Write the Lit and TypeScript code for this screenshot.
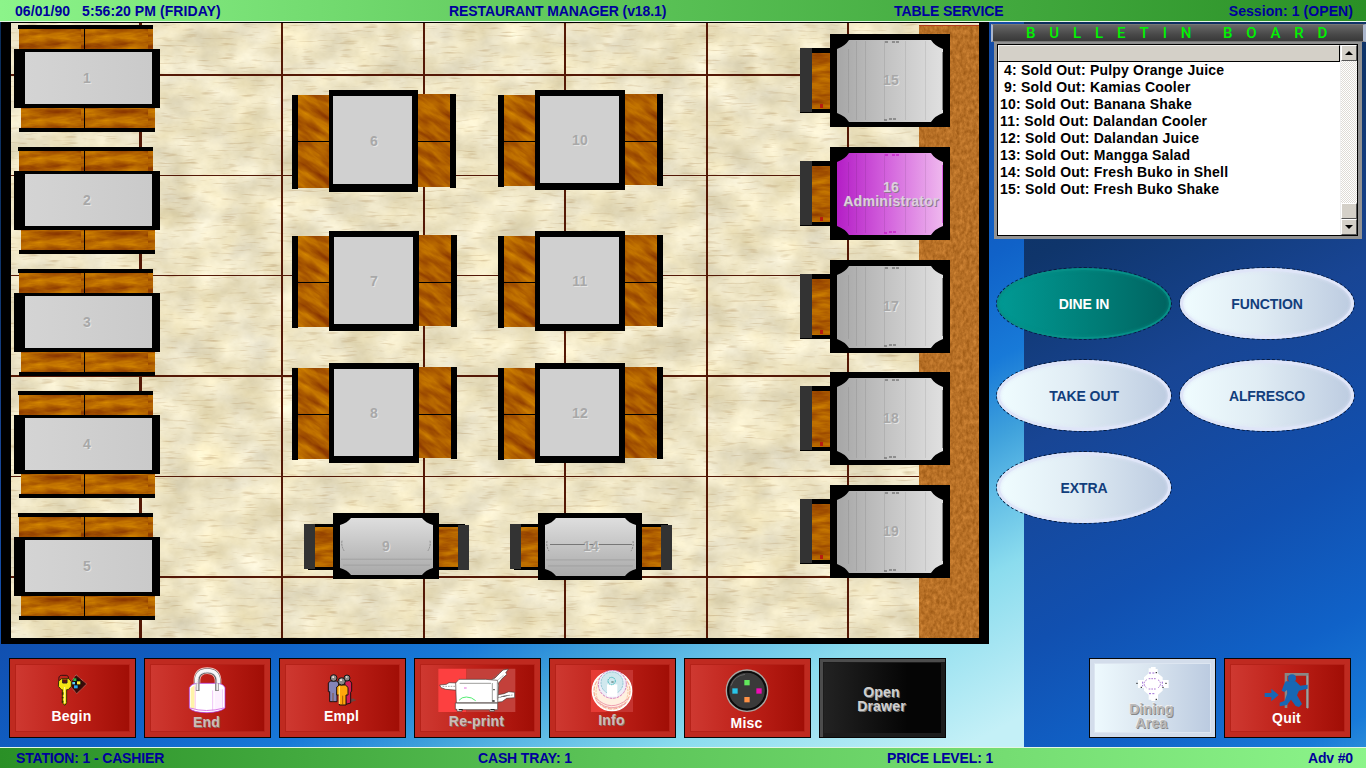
import { LitElement, html, svg, css, nothing } from "lit";
import { customElement } from "lit/decorators.js";
import { classMap } from "lit/directives/class-map.js";
import { styleMap } from "lit/directives/style-map.js";

type Kind = "booth" | "square" | "lounge" | "window";
interface Table { n: string; kind: Kind; x: number; y: number; w: number; h: number; lx: number; ly: number; owner?: string; }

// Positions are relative to the floor canvas, whose origin is at (0, 22).
const TABLES: Table[] = [
  ...[0, 1, 2, 3, 4].map((i): Table => ({ n: String(i + 1), kind: "booth", x: 14, y: 3 + i * 122, w: 146, h: 107, lx: 73, ly: 53 })),
  { n: "6", kind: "square", x: 292, y: 68, w: 164, h: 102, lx: 82, ly: 51 },
  { n: "7", kind: "square", x: 292, y: 209, w: 165, h: 100, lx: 82, ly: 50 },
  { n: "8", kind: "square", x: 292, y: 341, w: 165, h: 100, lx: 82, ly: 50 },
  { n: "10", kind: "square", x: 498, y: 68, w: 165, h: 100, lx: 82, ly: 50 },
  { n: "11", kind: "square", x: 498, y: 209, w: 165, h: 100, lx: 82, ly: 50 },
  { n: "12", kind: "square", x: 498, y: 341, w: 165, h: 100, lx: 82, ly: 50 },
  { n: "9", kind: "lounge", x: 304, y: 491, w: 165, h: 66, lx: 82, ly: 33 },
  { n: "14", kind: "lounge", x: 510, y: 491, w: 162, h: 67, lx: 81, ly: 33 },
  ...[12, 125, 238, 350, 463].map((y, i): Table => ({
    n: String(i + 15), kind: "window", x: 800, y, w: 150, h: 93, lx: 91, ly: 46,
    owner: i === 1 ? "Administrator" : undefined,
  })),
];

const BULLETINS = [
  " 4: Sold Out: Pulpy Orange Juice", " 9: Sold Out: Kamias Cooler", "10: Sold Out: Banana Shake",
  "11: Sold Out: Dalandan Cooler", "12: Sold Out: Dalandan Juice", "13: Sold Out: Mangga Salad",
  "14: Sold Out: Fresh Buko in Shell", "15: Sold Out: Fresh Buko Shake",
];

const MODES = ["DINE IN", "FUNCTION", "TAKE OUT", "ALFRESCO", "EXTRA"];

// A plate with gently concave corners, a wide and b tall.
const plate = (x: number, y: number, w: number, h: number, a: number, b: number) => {
  const r = x + w, d = y + h, p = a * 0.68, q = b * 0.68;
  return `M${x + a} ${y}H${r - a}Q${r - p} ${y + q} ${r} ${y + b}V${d - b}Q${r - p} ${d - q} ${r - a} ${d}H${x + a}Q${x + p} ${d - q} ${x} ${d - b}V${y + b}Q${x + p} ${y + q} ${x + a} ${y}Z`;
};

function tableArt(t: Table) {
  const { w, h } = t;
  if (t.kind === "booth") return svg`
    <rect x="5" y="4" width="134" height="21" fill="url(#wood)"/><rect x="4" y="0" width="135" height="4"/>
    <rect x="7" y="83" width="134" height="21" fill="url(#wood)"/><rect x="5" y="103" width="136" height="4"/>
    <rect x="70" y="3" width="1" height="100"/>
    <rect y="24" width="146" height="59"/><rect x="11" y="27" width="127" height="52" fill="url(#flat)"/>`;
  if (t.kind === "square") {
    const tw = w - 75, r = 37 + tw, six = h === 102 ? 1 : 0;
    return svg`
    <rect x="6" y="5" width="31" height="${h - 9}" fill="url(#wood2)"/><rect x="0" y="5" width="6" height="${h - 8}"/>
    <rect x="${r}" y="4" width="32" height="${h - 9}" fill="url(#wood2)"/><rect x="${r + 32}" y="4" width="6" height="${h - 8}"/>
    <rect x="6" y="51" width="${w - 12}" height="1"/>
    <rect x="37" width="${tw}" height="${h}"/>
    <rect x="${42 - six}" y="6" width="79" height="${h - 13 - six}" fill="#d0d0d0"/>`;
  }
  if (t.kind === "lounge") {
    const l = t.n === "9" ? 29 : 28, tw = t.n === "9" ? 106 : 104, e = l + tw;
    return svg`
    <rect x="4" y="11" width="${w - 8}" height="46"/>
    <rect x="0" y="11" width="11" height="45" fill="#333"/><rect x="${w - 11}" y="12" width="11" height="45" fill="#333"/>
    <rect x="11" y="14" width="${l - 11}" height="40" fill="url(#wood3)"/>
    <rect x="${e}" y="14" width="19" height="40" fill="url(#wood3)"/>
    <rect x="${l}" width="${tw}" height="${h}"/>
    <path d="${plate(l + 7, 5, tw - 13, h - 9, 11, 7)}" fill="url(#down)"/>
    <path d="M${l + 8} ${h * .7}H${e - 7}M${l + 10} ${h * .79}H${e - 9}" stroke="#999" stroke-width=".7"/>
    <path d="M${l + 9} ${h * .42}q-1 5 2 10M${e - 9} ${h * .42}q1 5-2 10" fill="none" stroke="#888" stroke-dasharray="2 1"/>
    ${t.n === "14" ? svg`<path d="M${l + 12} 31.5H${e - 10}" stroke="#777"/>` : nothing}`;
  }
  return svg`
    <rect y="14" width="31" height="65"/><rect y="14" width="12" height="64" fill="#333"/>
    <rect x="12" y="19" width="18" height="56" fill="url(#wood3)"/><rect x="20" y="70" width="3" height="4" fill="#b81c10"/>
    <rect x="30" width="120" height="93"/>
    <path d="${plate(37, 6, 106, 82, 12, 9)}" fill="url(#${t.owner ? "busy" : "side"})"/>
    <path d="M48.500 15V79M56.500 7V86M65.500 7V86M84.500 7V86M105.500 7V86M125.500 7V86" stroke="#000" stroke-opacity=".08"/>
    <path d="M85 8h4m3 0h8M84 86h3m2-1h8" stroke="${t.owner ? "#c000c0" : "#555"}" stroke-dasharray="3 1"/>
    <path d="M142.500 18V76" stroke="${t.owner ? "#e060e8" : "#888"}"/>`;
}

const ICONS: Record<string, unknown> = {
  key: svg`<svg viewBox="170 100 96 102" width="32" height="34">
    <path d="M230 105l32 28-30 29-22-27z" fill="#3a0a08" stroke="#eaa89a" stroke-width="2" stroke-dasharray="3 2"/>
    <path d="M220 130l12-16 16 14-12 20z" fill="#111"/><path d="M222 116h9v8h-9z" fill="#28b840"/><path d="M233 125h10v9h-10z" fill="#ffef30"/><path d="M224 137h11v9h-11z" fill="#28a8f0"/><path d="M219 127h8v7h-8z" fill="#58d0ff"/>
    <path d="M179 124q-3-17 8-17h14q9 0 6 19" fill="none" stroke="#311" stroke-width="3"/>
    <path d="M178 124l9-7h22l7 9v14l-9 10h-5v39l-5 8-8-7v-40h-3l-9-10z" fill="#f4e414" stroke="#3b3000" stroke-width="3"/>
    <path d="M190 119v11h13v-11" fill="#681008" stroke="#222" stroke-width="3"/><path d="M196 142v48" stroke="#fffba0" stroke-width="3"/><path d="M190 158v7m0 7v4m0 7v6" stroke="#332c00" stroke-width="5"/></svg>`,
  lock: svg`<svg viewBox="563 80 114 141" width="38" height="47">
    <path d="M590 150v-32q2-27 31-27t32 27v32" fill="none" stroke="#f3c3bd" stroke-width="20"/>
    <path d="M590 150v-32q2-27 31-27t32 27v32" fill="none" stroke="#555" stroke-width="15"/>
    <path d="M589 150v-32q2-27 32-27t33 27v32" fill="none" stroke="#f8f8f8" stroke-width="11"/>
    <path d="M593 150v-30q3-24 28-24t28 24v30" fill="none" stroke="#aab" stroke-width="2" stroke-dasharray="4 2"/>
    <path d="M567 142q6-12 22-13h60q20 1 25 13v61q-15 13-54 14-42 0-53-14z" fill="#fff" stroke="#b030e8" stroke-width="2"/>
    <path d="M571 143l12-8v73l-12-6z" fill="#fff4a8"/><path d="M585 139v67" stroke="#ffd6ee" stroke-width="4"/><path d="M637 150v61m29-64v57" stroke="#e7a4f2" stroke-width="2"/><path d="M643 146h19v63h-19z" fill="#fdf0ff"/><path d="M569 203q48 15 102 0" fill="none" stroke="#d87be7" stroke-width="3"/><path d="M592 129v23m58-23v23" stroke="#777" stroke-width="11"/><path d="M591 129v21m60-21v21" stroke="#eee" stroke-width="6"/></svg>`,
  people: svg`<svg viewBox="984 100 90 102" width="30" height="34">
    <path d="M1034 196l38-14-10-6-25 10z" fill="#6d4440"/>
    <g stroke="#1d1010" stroke-width="3"><path d="M1037 128l6-5h10l5 7v24l-3 4v32l-14 4z" fill="#d51d55"/><path d="M988 130l6-6h19l6 6v26h-5v30h-22v-30h-4z" fill="#8484b8"/>
    <path d="M1013 142l8-6h18l8 7v23h-6v30h-20v-30h-8z" fill="#ffa60b"/></g>
    <path d="M1021 140v53" stroke="#ffe070" stroke-width="4"/><path d="M1031 168v27m-29-35v26" stroke="#7a3900" stroke-width="2"/>
    <g fill="#8d8787" stroke="#161616" stroke-width="3"><circle cx="1044" cy="115" r="9"/><circle cx="1004" cy="115" r="10"/><circle cx="1028" cy="125" r="11"/></g>
    <path d="M1000 110h5v5h-5zM1041 110h4v4h-4zM1023 119h6v5h-6z" fill="#f0e8e0"/></svg>`,
  printer: svg`<svg viewBox="86 85 234 135" width="78" height="45">
    <path d="M87 87h84v130H87z" fill="#fd4040"/><path d="M171 87h147v130H171z" fill="#c3403a"/>
    <g fill="#fff" stroke="#4a3733" stroke-width="2"><path d="M145 130l-26-1-8 5-20 2 4 8 14 5 36 3zM243 122l14-7 14-14 10-10 16-3-8 12 4 4-14 12-14 18zM262 166l22-4 14-6 18 2v16l-24 2-14 10-18 2z"/><path d="M139 130l10-11h80l35 3 4 14-3 54H141z"/><path d="M138 190h127v20h-10v5h-14v-5h-83v5h-15v-6h-5z"/></g>
    <path d="M151 131h94m-103 59h123m-16-60v56m15-58v52" stroke="#70706c" stroke-width="2"/><path d="M149 182q8-10 22-10 16 0 28 11" fill="none" stroke="#52ed72" stroke-width="3"/><path d="M250 116l24-18m-10 24l20-16M266 174l20-6 24-2M100 140h40" stroke="#777" stroke-width="2" stroke-dasharray="5 3"/><path d="M164 145h8" stroke="#e76ddd" stroke-width="3"/><path d="M249 184h7m-4-34h4M148 210h12m83 0h13" stroke="#222" stroke-width="4"/></svg>`,
  info: svg`<svg viewBox="543 90 126 126" width="42" height="42">
    <path d="M543 90h126v126H543z" fill="#e63b35"/><path d="M589 90h80v126h-80z" fill="#c53430"/>
    <circle cx="606" cy="153" r="59" fill="#fff0e0" stroke="#fff" stroke-width="4"/><circle cx="606" cy="153" r="54" fill="none" stroke="#f2a48b" stroke-width="3" stroke-dasharray="12 5"/><circle cx="606" cy="156" r="48" fill="none" stroke="#f6c79b" stroke-width="3" stroke-dasharray="7 3"/><path d="M556 172q46 48 98 4M560 184q42 36 88 6" fill="none" stroke="#efa0b0" stroke-width="3"/><circle cx="607" cy="133" r="42" fill="#eeeef8" stroke="#d77fbb" stroke-width="3" stroke-dasharray="8 3"/><circle cx="606" cy="129" r="33" fill="#d0e8ee" stroke="#73b5c6" stroke-width="2" stroke-dasharray="7 2"/><path d="M591 133h31v37h-31z" fill="#fff"/><circle cx="605" cy="123" r="11" fill="none" stroke="#40b8bc" stroke-width="3" stroke-dasharray="5 2"/><path d="M604 126h7" stroke="#39605b" stroke-width="3"/></svg>`,
  misc: svg`<svg viewBox="136 83 132 138" width="44" height="46">
    <circle cx="202" cy="151" r="62" fill="#202020" stroke="#aaa6a2" stroke-width="4"/><circle cx="202" cy="151" r="56" fill="#3a3a3a" stroke="#0a0a0a" stroke-width="5"/><path d="M154 136q10-30 42-34" fill="none" stroke="#777" stroke-width="2"/><path d="M194 119h16v16h-16z" fill="#61e85c"/><path d="M158 144h16v16h-16z" fill="#29c4e7"/><path d="M230 144h16v16h-16z" fill="#ee0cb4"/><path d="M194 170h16v16h-16z" fill="#ff9145"/></svg>`,
  seats: svg`<svg viewBox="166 80 102 102" width="34" height="34">
    <path d="M207 84h7v-4h14v6h6v13l15 12v8h18v24h-18v8l-14 12v15h-8v4h-12v-4h-8v-15l-14-12v-8h-18v-24h18v-8l14-12z" fill="#fff"/>
    <path d="M201 118q-15 12 0 25m34-25q15 12 0 25M207 115h23m-23 31h23" fill="none" stroke="#8536be" stroke-width="2" stroke-dasharray="5 3"/><path d="M189 124v14m59-14v14m-40-40h20m-20 62h20" stroke="#6b23c0" stroke-width="2" stroke-dasharray="6 4"/><path d="M170 129h4m9 12h4m70-12h4m-13 12h4m-24-44h4m-4 80h4" stroke="#111" stroke-width="3"/></svg>`,
  exit: svg`<svg viewBox="553 94 138 114" width="46" height="38">
    <path d="M619 202V101h64v101" fill="none" stroke="#8a8784" stroke-width="8"/><path d="M684 105v99" stroke="#b9b2ad" stroke-width="2"/>
    <path d="M555 157h20v-13l22 19-22 19v-13h-20z" fill="#1767b4"/><circle cx="637" cy="113" r="12" fill="#1767b4"/>
    <path d="M618 122h30l14 13 22-3v12l-26 6-6 14 15 26-9 9-10-3-14-19-12 16-22 4v-11l15-6 8-22-1-10-8 6-8-4 6-16z" fill="#1767b4"/></svg>`,
};

interface Action { label: string[]; icon?: string; top: number; gap: number; tone?: string; off?: boolean; }
const ACTIONS: Action[] = [
  { label: ["Begin"], icon: "key", top: 14, gap: 2 },
  { label: ["End"], icon: "lock", top: 8, gap: 1, off: true },
  { label: ["Empl"], icon: "people", top: 14, gap: 2 },
  { label: ["Re-print"], icon: "printer", top: 9, gap: 1, off: true },
  { label: ["Info"], icon: "info", top: 11, gap: 1, off: true },
  { label: ["Misc"], icon: "misc", top: 9, gap: 2 },
  { label: ["Open", "Drawer"], top: 26, gap: 0, tone: "black", off: true },
];
const RIGHT: Action[] = [
  { label: ["Dining", "Area"], icon: "seats", top: 8, gap: 1, tone: "pale", off: true },
  { label: ["Quit"], icon: "exit", top: 13, gap: 1 },
];

@customElement("app-root")
export class AppRoot extends LitElement {
  static styles = css`
    :host { display: flex; flex-direction: column; width: 1366px; height: 768px; overflow: hidden; position: relative;
      font: bold 14px/14px "Liberation Sans", Arial, sans-serif; letter-spacing: -.1px;
      background: linear-gradient(151.6deg, #0a2c58 0%, #0f356b 20%, #184594 34%, #1150b0 49%, #1062c8 60%, #187ad8 68%, #40a2dc 74%, #58b6e4 77%, #8bdcee 84%, #c4f0f7 96%) 0 0 / 1024px 768px repeat-x; }
    * { box-sizing: border-box; }
    .bar { display: grid; height: 22px; flex: none; color: #00009c; white-space: pre; padding: 4px 13px 0 15px;
      background: linear-gradient(90deg, #8cf48a, #5cc458 45%, #2a9026); border-bottom: 1px solid #e4f6e4;
      grid-template-columns: 434px 445px 1fr auto; }
    .bar.foot { height: 21px; border-bottom: 0; border-top: 1px solid #e4f6e4; grid-template-columns: 462px 409px 1fr auto; padding-left: 16px; padding-top: 3px;
      background: linear-gradient(90deg, #2a9026, #5cc458 45%, #8cf48a); }
    .bar span:first-child, .bar span:last-child { letter-spacing: .08px; }
    .bar.foot span { letter-spacing: -.15px; }
    .main { display: grid; grid-template-columns: 989px 1fr; height: 622px; flex: none; }
    .floor { position: relative; height: 622px; }
    .ground { display: block; }
    .table { position: absolute; }
    .table svg { display: block; overflow: visible; }
    .tag { position: absolute; transform: translate(-50%, -50%); text-align: center; color: #a8a8a8; text-shadow: 1px 1px 0 #e4e4e4; letter-spacing: .3px; white-space: nowrap; }
    .tag.on { color: #dccfdf; text-shadow: 1px 1px 0 #8e7890; }
    .side { display: flex; flex-direction: column; }
    .title { display: flex; align-items: center; height: 18px; margin: 2px 0 0 2px; padding-left: 33px; border: 1px solid #777; border-left: 2px solid #aab6cc; border-right: 3px solid #aab6cc;
      background: linear-gradient(#686868, #484848 60%, #383838); color: #00f400; font: 500 15px/16px Roboto, sans-serif; letter-spacing: 13.9px; white-space: pre; overflow: hidden; }
    .board { display: grid; grid-template-columns: 1fr 17px; height: 197px; margin: 0 4px 0 5px; border: 3px solid #929292; border-top-width: 2px; border-right-width: 4px; background: #000; padding: 1px; }
    .list { background: #fff; }
    .head { height: 17px; background: #d4d0c8; border: 1px solid #f4f2ee; border-right: 1px solid #000; border-bottom: 1px solid #000; }
    .line { height: 17px; line-height: 17px; padding-left: 2px; color: #000; white-space: pre; letter-spacing: .2px; }
    .scroll { display: flex; flex-direction: column; background: repeating-conic-gradient(#fff 0 25%, #dedbd5 0 50%) 0 0 / 2px 2px; border-left: 1px solid #eee; }
    .knob { display: flex; align-items: center; justify-content: center; height: 16px; background: #d4d0c8; border: 1px solid; border-color: #fff #555 #555 #fff; }
    .knob.thumb { margin-top: auto; }
    .modes { display: grid; grid-template-columns: 176px 176px; grid-auto-rows: 73px; gap: 19px 7px; margin: 28px 0 0 7px; }
    .mode { display: flex; align-items: center; justify-content: center; border-radius: 50%; border: 1px dashed #081c40; color: #123e7c;
      background: linear-gradient(90deg, #f0fdff, #e0ecf4 45%, #bccbe0) padding-box; box-shadow: inset 0 0 0 3px #dfe5f8, inset 0 0 3px 4px #dfe5f890; }
    .mode.sel { color: #fff; background: linear-gradient(90deg, #019a94, #007b75 60%, #006360) padding-box; box-shadow: inset 0 0 0 2px #078f87, inset 0 0 3px 3px #078f8770; }
    .actions { display: flex; gap: 8px; height: 103px; flex: none; padding: 14px 15px 0 9px; }
    .push { display: flex; flex-direction: column; align-items: center; width: 127px; height: 80px; padding-right: 1px; border: 1px solid #060606; color: #fff; letter-spacing: .2px;
      background: linear-gradient(90deg, #d03b33, #bd2018 50%, #9e0c04); box-shadow: inset 0 0 0 5px #bf2a20, inset 0 0 0 6px #b52219; }
    .push.black { background: linear-gradient(90deg, #242424, #050505 70%); box-shadow: inset 2px 2px 0 1px #4c4c4c, inset 0 0 0 4px #1c1c1c; }
    .push.pale { background: linear-gradient(90deg, #effbff, #dbe6f0 45%, #b9c9df); box-shadow: inset 0 0 0 4px #d3ddeb, inset 0 0 0 5px #dde6f1; }
    .push svg { display: block; }
    .cap { text-align: center; margin-right: 1px; }
    .off .cap { color: #cbbdb7; text-shadow: 1px 1px 0 #8c706b; }
    .black .cap { color: #d0d0d0; text-shadow: 1px 1px 0 #777; }
    .pale .cap { color: #b9b9b9; text-shadow: 1px 1px 0 #888, -1px -1px 0 #eee; }
    .gap { flex: 1; }
  `;

  private ground() {
    return html`<svg class="ground" width="989" height="622" viewBox="0 22 989 622">
      <defs>
        <filter id="marble" x="0" y="0" width="100%" height="100%" color-interpolation-filters="sRGB">
          <feTurbulence type="fractalNoise" baseFrequency=".026 .036" numOctaves="5" seed="8"/>
          <feColorMatrix values=".22 0 0 0 .82  .23 .03 0 0 .765  .24 .12 0 0 .59  0 0 0 0 1"/></filter>
        <filter id="streak" x="0" y="0" width="100%" height="100%" color-interpolation-filters="sRGB">
          <feTurbulence type="fractalNoise" baseFrequency=".05 .4" numOctaves="2" seed="4"/>
          <feColorMatrix values="0 0 0 0 .66  0 0 0 0 .52  0 0 0 0 .32  1.2 0 0 0 -.7"/></filter>
        <filter id="grain" x="0" y="0" width="100%" height="100%" color-interpolation-filters="sRGB">
          <feTurbulence type="fractalNoise" baseFrequency=".3 .2" numOctaves="3" seed="2"/>
          <feColorMatrix values=".28 0 0 0 .58  .24 0 0 0 .32  .18 0 0 0 .06  0 0 0 0 1"/></filter>
        <filter id="burl" x="0" y="0" width="100%" height="100%" color-interpolation-filters="sRGB">
          <feTurbulence type="fractalNoise" baseFrequency=".03 .12" numOctaves="4" seed="11"/>
          <feColorMatrix values=".42 0 0 0 .47  .45 0 0 0 .14  0 0 0 0 0  0 0 0 0 1"/></filter>
        <pattern id="wood" width="67" height="42" patternUnits="userSpaceOnUse"><rect width="67" height="42" filter="url(#burl)"/></pattern>
        <pattern id="wood2" width="170" height="110" patternUnits="userSpaceOnUse"><rect x="-120" y="-170" width="400" height="400" filter="url(#burl)" transform="rotate(35)"/></pattern>
        <pattern id="wood3" width="170" height="90" patternUnits="userSpaceOnUse"><rect width="170" height="90" filter="url(#burl)"/></pattern>
        <linearGradient id="flat"><stop stop-color="#d4d4d4"/><stop offset="1" stop-color="#cacaca"/></linearGradient>
        <linearGradient id="side"><stop stop-color="#a6a6a6"/><stop offset=".3" stop-color="#b9b9b9"/><stop offset="1" stop-color="#e0e0e0"/></linearGradient>
        <linearGradient id="busy"><stop stop-color="#b41ec6"/><stop offset=".45" stop-color="#d25fdc"/><stop offset="1" stop-color="#efb8ee"/></linearGradient>
        <linearGradient id="down" x2="0" y2="1"><stop stop-color="#dedede"/><stop offset="1" stop-color="#a9a9a9"/></linearGradient>
      </defs>
      <rect x="1" y="22" width="988" height="622"/>
      <rect x="11" y="23" width="968" height="615" filter="url(#marble)"/>
      <rect x="11" y="23" width="968" height="615" filter="url(#streak)"/>
      ${[75, 175, 275, 376, 476, 577].map((y, i) => svg`<rect x="11" y="${i % 3 === 0 || i === 5 ? y - 1 : y}" width="910" height="${i % 3 === 0 || i === 5 ? 2 : 1}" fill="#541806"/>`)}
      ${[140, 282, 424, 565, 707, 848].map((x, i) => svg`<rect x="${x - 1}" y="23" width="${i ? 2 : 3}" height="615" fill="#541806"/>`)}
      <rect x="919" y="25" width="60" height="613" filter="url(#grain)"/>
      <path d="M919 25.500H979" stroke="#b33a1c"/>
    </svg>`;
  }

  private push(a: Action) {
    return html`<div class=${classMap({ push: true, off: !!a.off, black: a.tone === "black", pale: a.tone === "pale" })}
      style=${styleMap({ paddingTop: `${a.top}px` })}>
      ${a.icon ? ICONS[a.icon] : nothing}
      <div class="cap" style=${styleMap({ marginTop: `${a.gap}px` })}>${a.label.map((l) => html`<div>${l}</div>`)}</div>
    </div>`;
  }

  render() {
    return html`
      <div class="bar"><span>06/01/90   5:56:20 PM (FRIDAY)</span><span>RESTAURANT MANAGER (v18.1)</span><span>TABLE SERVICE</span><span>Session: 1 (OPEN)</span></div>
      <div class="main">
        <div class="floor">
          ${this.ground()}
          ${TABLES.map((t) => html`<div class="table" style=${styleMap({ left: `${t.x}px`, top: `${t.y}px` })}>
            <svg width=${t.w} height=${t.h}>${tableArt(t)}</svg>
            <div class=${classMap({ tag: true, on: !!t.owner })} style=${styleMap({ left: `${t.lx}px`, top: `${t.ly + (t.owner ? 1 : 0)}px` })}>
              <div>${t.n}</div>${t.owner ? html`<div>${t.owner}</div>` : nothing}
            </div></div>`)}
        </div>
        <div class="side">
          <div class="title">BULLETIN BOARD</div>
          <div class="board">
            <div class="list"><div class="head"></div>${BULLETINS.map((b) => html`<div class="line">${b}</div>`)}</div>
            <div class="scroll">
              <div class="knob"><svg width="8" height="4"><path d="M0 4L4 0L8 4Z"/></svg></div>
              <div class="knob thumb"></div>
              <div class="knob"><svg width="8" height="4"><path d="M0 0L4 4L8 0Z"/></svg></div>
            </div>
          </div>
          <div class="modes">${MODES.map((m, i) => html`<div class=${classMap({ mode: true, sel: i === 0 })}>${m}</div>`)}</div>
        </div>
      </div>
      <div class="actions">${ACTIONS.map((a) => this.push(a))}<div class="gap"></div>${RIGHT.map((a) => this.push(a))}</div>
      <div class="bar foot"><span>STATION: 1 - CASHIER</span><span>CASH TRAY: 1</span><span>PRICE LEVEL: 1</span><span>Adv #0</span></div>`;
  }
}
